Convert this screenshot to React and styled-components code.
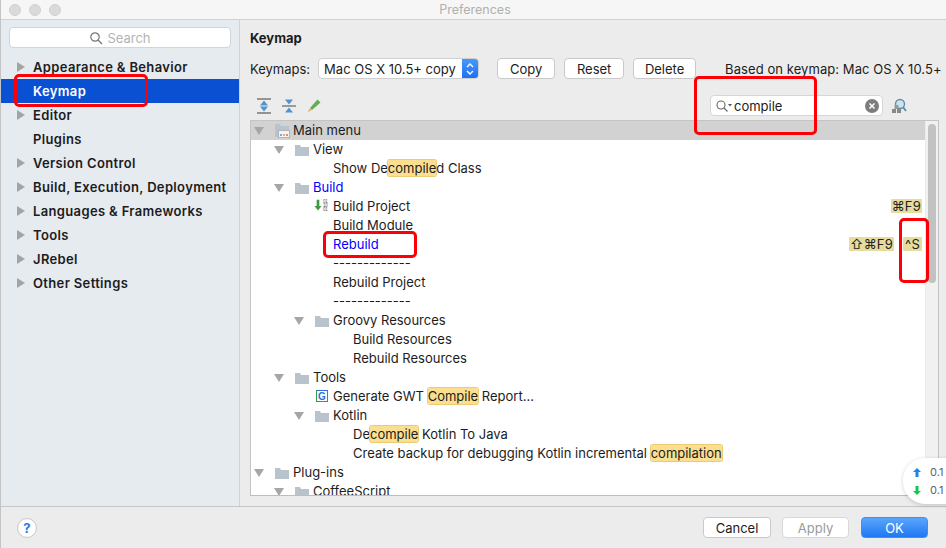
import React from "react"
import styled, {createGlobalStyle} from "styled-components"

const Global = createGlobalStyle`
  html, body { margin: 0; padding: 0; background: #ececec; }
  body { font-family: Inter, "Liberation Sans", sans-serif; font-size: 13px; color: #1c1c1c; }
`

const Window = styled.div`
  position: relative;
  width: 946px;
  height: 548px;
  overflow: hidden;
  display: flex;
  flex-direction: column;
  background: #ececec;
  border-left: 1px solid #c4c4c4;
  box-sizing: border-box;
`

const TitleBar = styled.div`
  height: 19px;
  flex-shrink: 0;
  display: flex;
  align-items: center;
  background: #f6f6f6;
  border-bottom: 1px solid #d0d0d0;
  padding-left: 8px;
  gap: 8px;
`

const Light = styled.span`
  width: 12px;
  height: 12px;
  border-radius: 50%;
  background: #dadada;
  border: 1px solid #d0d0d0;
  box-sizing: border-box;
`

const WindowTitle = styled.span`
  position: absolute;
  left: 3px;
  right: 0;
  top: 2px;
  text-align: center;
  color: #b0b0b0;
  font-size: 12.5px;
`

const Body = styled.div`
  flex: 1;
  display: flex;
  min-height: 0;
  border-bottom: 1px solid #c6c6c6;
`

const Sidebar = styled.aside`
  width: 238px;
  flex-shrink: 0;
  background: #e6ebf0;
  border-right: 1px solid #d2d2d2;
  padding-top: 7px;
`

const SideSearch = styled.div`
  margin: 0 8px 7px 8px;
  height: 21px;
  display: flex;
  align-items: center;
  justify-content: center;
  gap: 4px;
  background: #fff;
  border: 1px solid #d4d4d4;
  border-radius: 4px;
  color: #b4b4b4;
  box-sizing: border-box;
`

const SideItem = styled.div`
  height: 24px;
  display: flex;
  align-items: center;
  padding-left: 32px;
  position: relative;
  font-weight: 600;
  font-size: 13px;
  letter-spacing: 0.35px;
  color: ${({selected}) => (selected ? "#fff" : "#1c1c1c")};
  background: ${({selected}) => (selected ? "#0a50d2" : "transparent")};
`

const SideArrow = styled.span`
  position: absolute;
  left: 16px;
  top: 7px;
  width: 0;
  height: 0;
  border-left: 8px solid #a4a4a4;
  border-top: 5px solid transparent;
  border-bottom: 5px solid transparent;
`

const Main = styled.main`
  flex: 1;
  min-width: 0;
  display: flex;
  flex-direction: column;
  padding: 9px 7px 10px 10px;
`

const Heading = styled.div`
  font-weight: 700;
  font-size: 13px;
  height: 18px;
  line-height: 18px;
`

const KeymapRow = styled.div`
  margin-top: 11px;
  height: 21px;
  display: flex;
  align-items: center;
  white-space: nowrap;
`

const Label = styled.span`
  margin-right: 8px;
`

const Select = styled.div`
  width: 161px;
  height: 21px;
  flex-shrink: 0;
  display: flex;
  align-items: center;
  justify-content: space-between;
  background: #fff;
  border: 1px solid #cfcfcf;
  border-radius: 4px;
  box-sizing: border-box;
  padding-left: 5px;
  margin-right: 18px;
  overflow: hidden;
`

const SelectStepper = styled.span`
  width: 16px;
  height: 21px;
  display: flex;
  align-items: center;
  justify-content: center;
  background: linear-gradient(#4a9bfb, #1c6ff0);
`

const Button = styled.button`
  height: 21px;
  flex-shrink: 0;
  width: ${({w}) => w}px;
  margin-right: ${({gap}) => gap || 0}px;
  padding: 0;
  font: inherit;
  color: ${({disabled}) => (disabled ? "#9a9a9a" : "#1c1c1c")};
  background: #fff;
  border: 1px solid ${({disabled}) => (disabled ? "#d8d8d8" : "#c9c9c9")};
  border-radius: 4px;
`

const PrimaryButton = styled(Button)`
  color: #fff;
  background: linear-gradient(#5aa6fb, #1f78f5);
  border-color: #3f8ef5;
`

const BasedOn = styled.span`
  margin-left: 29px;
  flex-shrink: 0;
  letter-spacing: 0.07px;
`

const ToolRow = styled.div`
  height: 41px;
  display: flex;
  align-items: center;
  padding-left: 6px;
  gap: 9px;
  box-sizing: border-box;
  padding-top: 12px;
`

const ToolIcon = styled.svg`
  width: 16px;
  height: 16px;
  flex-shrink: 0;
`

const FilterBox = styled.div`
  margin-left: auto;
  width: 173px;
  height: 21px;
  display: flex;
  align-items: center;
  background: #fff;
  border: 1px solid #d6d6d6;
  border-radius: 4px;
  box-sizing: border-box;
  padding: 0 3px 0 4px;
  gap: 1px;
`

const FilterText = styled.span`
  flex: 1;
`

const FindUsage = styled(ToolIcon)`
  margin: 0 32px 0 -1px;
`

const Tree = styled.div`
  flex: 1;
  min-height: 0;
  display: flex;
  background: #fff;
  border: 1px solid #c4c4c4;
  border-bottom-color: #bdbdbd;
  overflow: hidden;
`

const Rows = styled.div`
  flex: 1;
  min-width: 0;
  overflow: hidden;
`

const Row = styled.div`
  height: 19px;
  box-sizing: border-box;
  display: flex;
  align-items: center;
  white-space: nowrap;
  padding: 0 3px 2px ${({level}) => 3 + level * 20}px;
  background: ${({head}) => (head ? "#d2d2d2" : "transparent")};
  color: ${({blue}) => (blue ? "#0000ff" : "#1c1c1c")};
`

const Twist = styled.span`
  width: 0;
  height: 0;
  flex-shrink: 0;
  border-top: 8px solid #a6a6a6;
  border-left: 5px solid transparent;
  border-right: 5px solid transparent;
  margin: 2px 10px 0 0;
`

const IconSlot = styled.span`
  width: 16px;
  height: 16px;
  flex-shrink: 0;
  margin-right: 3px;
  display: flex;
`

const LeafPad = styled.span`
  width: ${({w}) => w}px;
  flex-shrink: 0;
`

const Match = styled.span`
  background: #fbdf91;
  border-radius: 2px;
  box-shadow: 0 0 0 1px #eccb74;
`

const Shortcuts = styled.span`
  margin-left: auto;
  display: flex;
  gap: 9px;
`

const Shortcut = styled.span`
  background: #e5dc9e;
  color: #222;
  min-width: 19px;
  text-align: center;
  padding: 0 1px;
  box-sizing: border-box;
  height: 14px;
  line-height: 14px;
  border-radius: 1px;
  letter-spacing: 0.2px;
`

const ScrollTrack = styled.div`
  width: 13px;
  flex-shrink: 0;
  background: #f1f1f1;
  border-left: 1px solid #ececec;
  box-sizing: border-box;
  padding: 3px 2px 0 2px;
`

const ScrollThumb = styled.div`
  height: 159px;
  border-radius: 5px;
  background: #c2c2c2;
`

const Footer = styled.footer`
  height: 41px;
  flex-shrink: 0;
  display: flex;
  align-items: center;
  padding: 0 18px 0 16px;
  box-sizing: border-box;
`

const Help = styled.span`
  width: 20px;
  height: 20px;
  border-radius: 50%;
  background: #fff;
  border: 1px solid #c8c8c8;
  box-sizing: border-box;
  color: #2a7be8;
  font-weight: 700;
  font-size: 13px;
  display: flex;
  align-items: center;
  justify-content: center;
  margin-right: auto;
`

const Callout = styled.div`
  position: absolute;
  left: ${({x}) => x}px;
  top: ${({y}) => y}px;
  width: ${({w}) => w}px;
  height: ${({h}) => h}px;
  border: 3px solid #fb0007;
  border-radius: 5px;
  box-sizing: border-box;
`

const NetWidget = styled.div`
  position: absolute;
  left: 902px;
  top: 458px;
  width: 60px;
  height: 46px;
  border-radius: 22px 0 0 22px;
  background: #fff;
  box-shadow: 0 1px 4px rgba(0, 0, 0, 0.18);
  display: flex;
  flex-direction: column;
  justify-content: center;
  gap: 2px;
  padding-left: 10px;
  box-sizing: border-box;
  font-size: 11px;
  color: #5a6470;
`

const NetLine = styled.div`
  display: flex;
  align-items: center;
  gap: 9px;
  height: 16px;
`

const Folder = () => (
  <svg width="16" height="16" viewBox="0 0 16 16">
    <path d="M1 4h5l1 2h8v9H1z" fill="#b9c3cc" />
  </svg>
)

const MenuFolder = () => (
  <svg width="16" height="16" viewBox="0 0 16 16">
    <path d="M1 2h5l1 2h8v4H6v7H1z" fill="#b9c3cc" />
    <rect x="4.5" y="8.5" width="11" height="7" fill="#f4f4f4" stroke="#b0b4b8" />
    <rect x="6" y="12" width="2" height="2" fill="#7fa8dc" />
    <rect x="9" y="12" width="2" height="2" fill="#e3b364" />
    <rect x="12" y="12" width="2" height="2" fill="#dc8c7c" />
  </svg>
)

const BuildIcon = () => (
  <svg width="18" height="16" viewBox="0 0 18 16">
    <path d="M3 1h3v7h2.5L4.5 13 .5 8H3z" fill="#3f9a45" />
    <text x="10" y="5" fontSize="5" fill="#555" fontFamily="Liberation Sans, sans-serif">01</text>
    <text x="10" y="9.5" fontSize="5" fill="#555" fontFamily="Liberation Sans, sans-serif">10</text>
    <text x="10" y="14" fontSize="5" fill="#555" fontFamily="Liberation Sans, sans-serif">01</text>
  </svg>
)

const GwtIcon = () => (
  <svg width="16" height="16" viewBox="0 0 16 16">
    <rect x="2.5" y="2.5" width="11" height="11" fill="#fff" stroke="#2f9e44" />
    <path d="M2.5 2.5h11" stroke="#2a6fdc" />
    <text x="8" y="12" fontSize="10" fontWeight="700" textAnchor="middle" fill="#2a6fdc" fontFamily="Liberation Sans, sans-serif">G</text>
  </svg>
)

const icons = {folder: <Folder />, menu: <MenuFolder />, build: <BuildIcon />, gwt: <GwtIcon />}

// level = indent step, open = has twist arrow
const treeRows = [
  {level: 0, open: true, icon: "menu", head: true, parts: ["Main menu"]},
  {level: 1, open: true, icon: "folder", parts: ["View"]},
  {level: 2, parts: ["Show De", {m: "compile"}, "d Class"]},
  {level: 1, open: true, icon: "folder", blue: true, parts: ["Build"]},
  {level: 2, icon: "build", parts: ["Build Project"], keys: ["⌘F9"]},
  {level: 2, parts: ["Build Module"]},
  {level: 2, blue: true, parts: ["Rebuild"], keys: ["⇧⌘F9", "^S"]},
  {level: 2, parts: ["-------------"]},
  {level: 2, parts: ["Rebuild Project"]},
  {level: 2, parts: ["-------------"]},
  {level: 2, open: true, icon: "folder", parts: ["Groovy Resources"]},
  {level: 3, parts: ["Build Resources"]},
  {level: 3, parts: ["Rebuild Resources"]},
  {level: 1, open: true, icon: "folder", parts: ["Tools"]},
  {level: 2, icon: "gwt", parts: ["Generate GWT ", {m: "Compile"}, " Report..."]},
  {level: 2, open: true, icon: "folder", parts: ["Kotlin"]},
  {level: 3, parts: ["De", {m: "compile"}, " Kotlin To Java"]},
  {level: 3, parts: ["Create backup for debugging Kotlin incremental ", {m: "compilation"}]},
  {level: 0, open: true, icon: "folder", parts: ["Plug-ins"]},
  {level: 1, open: true, icon: "folder", parts: ["CoffeeScript"]},
]

const sideItems = [
  {label: "Appearance & Behavior", arrow: true},
  {label: "Keymap", selected: true},
  {label: "Editor", arrow: true},
  {label: "Plugins"},
  {label: "Version Control", arrow: true},
  {label: "Build, Execution, Deployment", arrow: true},
  {label: "Languages & Frameworks", arrow: true},
  {label: "Tools", arrow: true},
  {label: "JRebel", arrow: true},
  {label: "Other Settings", arrow: true},
]

function TreeRow({row}) {
  const {level, open, icon, head, blue, parts, keys} = row
  return (
    <Row level={level} head={head} blue={blue}>
      {open ? <Twist /> : <LeafPad w={icon ? 20 : 39} />}
      {icon ? <IconSlot>{icons[icon]}</IconSlot> : null}
      <span>
        {parts.map((p, i) => (typeof p === "string" ? p : <Match key={i}>{p.m}</Match>))}
      </span>
      {keys ? (
        <Shortcuts>
          {keys.map((k) => <Shortcut key={k}>{k}</Shortcut>)}
        </Shortcuts>
      ) : null}
    </Row>
  )
}

export default function App() {
  return (
    <Window>
      <Global />
      <TitleBar>
        <Light /><Light /><Light />
        <WindowTitle>Preferences</WindowTitle>
      </TitleBar>
      <Body>
        <Sidebar>
          <SideSearch>
            <svg width="14" height="14" viewBox="0 0 14 14" fill="none" stroke="#777" strokeWidth="1.2">
              <circle cx="6" cy="6" r="4.2" />
              <path d="M9 9l4 4" />
            </svg>
            Search
          </SideSearch>
          {sideItems.map((it) => (
            <SideItem key={it.label} selected={it.selected}>
              {it.arrow ? <SideArrow /> : null}
              {it.label}
            </SideItem>
          ))}
        </Sidebar>
        <Main>
          <Heading>Keymap</Heading>
          <KeymapRow>
            <Label>Keymaps:</Label>
            <Select>
              Mac OS X 10.5+ copy
              <SelectStepper>
                <svg width="8" height="14" viewBox="0 0 8 14" fill="none" stroke="#fff" strokeWidth="1.4">
                  <path d="M1 5l3-3 3 3M1 9l3 3 3-3" />
                </svg>
              </SelectStepper>
            </Select>
            <Button w={58} gap={9}>Copy</Button>
            <Button w={60} gap={9}>Reset</Button>
            <Button w={63}>Delete</Button>
            <BasedOn>Based on keymap: Mac OS X 10.5+</BasedOn>
          </KeymapRow>
          <ToolRow>
            <ToolIcon viewBox="0 0 16 16">
              <path d="M1 1h14M1 15h14" stroke="#777" strokeWidth="1.4" />
              <path d="M8 2.5l4 5H4zM8 13.5l4-5H4z" fill="#4f94cf" />
            </ToolIcon>
            <ToolIcon viewBox="0 0 16 16">
              <path d="M1 8h14" stroke="#777" strokeWidth="1.4" />
              <path d="M8 6.5l4-5H4zM8 9.5l4 5H4z" fill="#4f94cf" />
            </ToolIcon>
            <ToolIcon viewBox="0 0 16 16">
              <path d="M4 10l7.5-8.5 3 3L6 12z" fill="#5fb04f" />
              <path d="M4 10l2 2-4.5 2.5z" fill="#e8b070" />
            </ToolIcon>
            <FilterBox>
              <svg width="18" height="14" viewBox="0 0 18 14" fill="none" stroke="#666" strokeWidth="1.1">
                <circle cx="6" cy="6" r="4" />
                <path d="M9 9l3.5 3.5" />
                <path d="M13 5h4l-2 2.5z" fill="#555" stroke="none" />
              </svg>
              <FilterText>compile</FilterText>
              <svg width="14" height="14" viewBox="0 0 14 14">
                <circle cx="7" cy="7" r="7" fill="#7d7d7d" />
                <path d="M4.5 4.5l5 5M9.5 4.5l-5 5" stroke="#fff" strokeWidth="1.6" />
              </svg>
            </FilterBox>
            <FindUsage viewBox="0 0 16 16">
              <circle cx="9" cy="6" r="4.5" fill="#cfe3ef" stroke="#5f8fa8" strokeWidth="1.4" />
              <path d="M12 9l3 4" stroke="#5f8fa8" strokeWidth="1.8" />
              <rect x="1" y="11" width="4" height="4" fill="#888" />
              <rect x="6" y="11" width="4" height="4" fill="#888" />
              <rect x="3.5" y="7" width="4" height="4" fill="#999" />
            </FindUsage>
          </ToolRow>
          <Tree>
            <Rows>
              {treeRows.map((r, i) => <TreeRow key={i} row={r} />)}
            </Rows>
            <ScrollTrack><ScrollThumb /></ScrollTrack>
          </Tree>
        </Main>
      </Body>
      <Footer>
        <Help>?</Help>
        <Button w={68} gap={11}>Cancel</Button>
        <Button w={67} gap={12} disabled>Apply</Button>
        <PrimaryButton w={67}>OK</PrimaryButton>
      </Footer>
      <NetWidget>
        <NetLine>
          <svg width="8" height="9" viewBox="0 0 8 9"><path d="M4 0l4 4H5.5v5h-3V4H0z" fill="#1a84f0" /></svg>
          0.1
        </NetLine>
        <NetLine>
          <svg width="8" height="9" viewBox="0 0 8 9"><path d="M4 9L0 5h2.5V0h3v5H8z" fill="#12c94e" /></svg>
          0.1
        </NetLine>
      </NetWidget>
      <Callout x={13} y={74} w={134} h={33} />
      <Callout x={693} y={76} w={123} h={59} />
      <Callout x={322} y={231} w={94} h={27} />
      <Callout x={898} y={218} w={30} h={65} />
    </Window>
  )
}
